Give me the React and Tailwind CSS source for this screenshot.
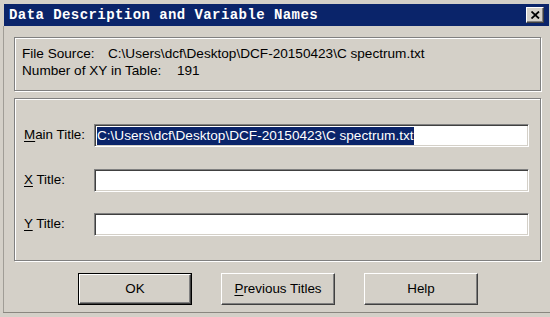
import React from "react";

const sans = { fontFamily: '"Liberation Sans", Arial, sans-serif' };

const raised =
  "border border-t-white border-l-white border-b-[#404040] border-r-[#404040] shadow-[inset_-1px_-1px_0_#808080] bg-[#d4d0c8]";
const sunken =
  "border border-t-[#808080] border-l-[#808080] border-b-white border-r-white shadow-[inset_1px_1px_0_#404040,inset_-1px_-1px_0_#d4d0c8] bg-white";
const etched = "border border-[#808080] shadow-[inset_1px_1px_0_#fff,1px_1px_0_#fff]";

const TitleRow = ({ hot, rest, children, className = "" }) => (
  <div className={`flex items-center h-[23px] ${className}`}>
    <label className="w-[70px] text-[13.4px] text-black">
      <span className="underline underline-offset-2">{hot}</span>
      {rest}
    </label>
    <div className={`w-[435px] h-[23px] flex items-center pl-[2px] ${sunken}`}>{children}</div>
  </div>
);

const Button = ({ children, isDefault }) => {
  const inner = (
    <div className={`h-full w-full flex items-center justify-center text-[13.4px] text-black ${raised}`}>
      {children}
    </div>
  );
  return isDefault ? (
    <div className="w-[114px] h-[32px] border border-black">{inner}</div>
  ) : (
    <div className="w-[114px] h-[32px]">{inner}</div>
  );
};

export default function App() {
  return (
    <div className="w-[550px] h-[317px] bg-[#d4d0c8] overflow-hidden relative" style={sans}>
      <div className="absolute left-[3px] top-[26px] bottom-[4px] w-px bg-[#a09d96]" />
      <div className="absolute left-[3px] right-0 bottom-[4px] h-px bg-[#8a8780]" />

      {/* title bar */}
      <div className="ml-[4px] pt-[4px]">
        <div className="w-[545px] h-[22px] bg-[#0a246a] flex items-center justify-between pl-[5px] pr-[5px]">
          <span
            className="text-white font-bold text-[14px] tracking-[0.43px] leading-none"
            style={{ fontFamily: '"Liberation Mono", "Courier New", monospace' }}
          >
            Data Description and Variable Names
          </span>
          <button className={`w-[18px] h-[16px] flex items-center justify-center ${raised}`}>
            <svg width="9" height="8" viewBox="0 0 9 8">
              <path d="M0.5 0.5 L8 7.5 M8 0.5 L0.5 7.5" stroke="#000" strokeWidth="1.8" />
            </svg>
          </button>
        </div>
      </div>

      <div className="pl-[14px] pr-[9px]">
        {/* file info */}
        <div className={`mt-[11px] h-[54px] pt-[7px] pl-[7px] text-[13.6px] leading-[17px] text-black ${etched}`}>
          <div className="flex">
            <span className="w-[86px]">File Source:</span>
            <span>C:\Users\dcf\Desktop\DCF-20150423\C spectrum.txt</span>
          </div>
          <div className="flex">
            <span className="w-[155px]">Number of XY in Table:</span>
            <span>191</span>
          </div>
        </div>

        {/* titles */}
        <div className={`mt-[7px] h-[163px] pl-[9px] pt-[25px] ${etched}`}>
          <TitleRow hot="M" rest="ain Title:">
            <span className="bg-[#0a246a] text-white text-[13.6px] leading-[18px] whitespace-nowrap">
              C:\Users\dcf\Desktop\DCF-20150423\C spectrum.txt
            </span>
          </TitleRow>
          <TitleRow hot="X" rest=" Title:" className="mt-[22px]" />
          <TitleRow hot="Y" rest=" Title:" className="mt-[21px]" />
        </div>

        {/* buttons */}
        <div className="mt-[12px] ml-[64px] flex gap-[29px]">
          <Button isDefault>OK</Button>
          <Button>
            <span>
              <span className="underline underline-offset-2">P</span>revious Titles
            </span>
          </Button>
          <Button>Help</Button>
        </div>
      </div>
    </div>
  );
}
